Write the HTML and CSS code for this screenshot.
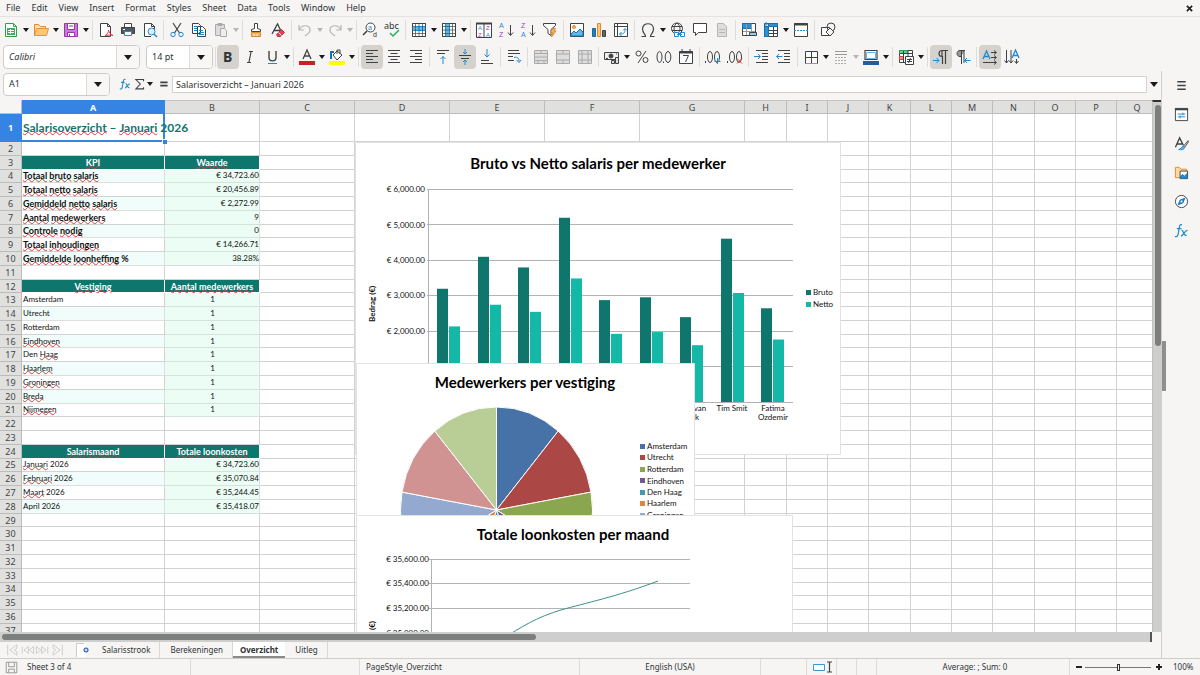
FILE: index.html
```html
<!DOCTYPE html>
<html lang="nl">
<head>
<meta charset="utf-8">
<title>Salarisoverzicht</title>
<link rel="stylesheet" href="styles.css">
</head>
<body>
<div class="app">
<header class="menubar">
  <nav class="menus" aria-label="Menu">
    <button>File</button><button>Edit</button><button>View</button><button>Insert</button><button>Format</button><button>Styles</button><button>Sheet</button><button>Data</button><button>Tools</button><button>Window</button><button>Help</button>
  </nav>
  <button class="close" aria-label="Close document"><svg viewBox="0 0 8 8"><path d="M1 1l6 6M7 1l-6 6"/></svg></button>
</header>

<div class="toolbar" role="toolbar" aria-label="Standard">
  <div class="group">
    <button class="tool" aria-label="New"><svg viewBox="0 0 16 16"><path stroke="#2f9e51" fill="#fff" d="M2.500 1.500h8l3 3v10h-11z"/><path stroke="#2f9e51" d="M10.500 1.500v3h3"/><path fill="#3aae5c" stroke="none" d="M4 6h8v7H4z"/><path stroke="#fff" d="M5 8.500h6M5 10.500h6M7.500 7v5"/></svg></button><button class="drop" aria-label="New options"></button>
    <button class="tool" aria-label="Open"><svg viewBox="0 0 16 16"><path fill="#fbe3b8" stroke="#dc8b33" d="M1.500 13.500v-11h4l2 2h5v3"/><path fill="#fcc877" stroke="#e3953d" d="M1.500 13.500l2-7h12l-2 7z"/></svg></button><button class="drop" aria-label="Recent files"></button>
    <button class="tool" aria-label="Save"><svg viewBox="0 0 16 16"><path fill="#c87bd0" stroke="#8f3da0" d="M1.500 1.500h13v13h-13z"/><path fill="#fff" stroke="#8f3da0" d="M4.500 1.500h7v6h-7zM4.500 10.500h7v4h-7z"/><path stroke="#8f3da0" d="M6 4h4M6.500 12v2"/></svg></button><button class="drop" aria-label="Save options"></button>
  </div>
  <div class="group">
    <button class="tool" aria-label="Export as PDF"><svg viewBox="0 0 16 16"><path fill="#fff" d="M2.500 1.500h7l3 3v10h-10z"/><path d="M9.500 1.500v3h3"/><path stroke="#dd3b4a" d="M7 14c3-3 3.500-4 3.500-6 .5 3 1.500 4 4.500 5.500-3-1-5-.5-8 .5z"/></svg></button>
    <button class="tool" aria-label="Print"><svg viewBox="0 0 16 16"><path fill="#fff" d="M4.500 1.500h7v4h-7z"/><path fill="#55585b" d="M1.500 5.500h13v6h-13z"/><path fill="#fff" stroke="#1e8bcd" d="M4.500 9.500h7v4h-7z"/><path stroke="#fff" d="M3 7.500h2"/></svg></button>
    <button class="tool" aria-label="Print preview"><svg viewBox="0 0 16 16"><path fill="#fff" d="M9 14.500H2.500v-13h7l3 3v3"/><path d="M9.500 1.500v3h3"/><circle cx="9.500" cy="9.500" r="3.500" fill="#d9eefb" stroke="#1e8bcd"/><path stroke="#1e8bcd" stroke-width="1.500" d="M12 12l3 3"/></svg></button>
  </div>
  <div class="group">
    <button class="tool" aria-label="Cut"><svg viewBox="0 0 16 16"><path stroke-width="1.200" d="M4 1l6.500 10M12 1L5.500 11"/><circle cx="4" cy="12.500" r="2.200" stroke="#1e8bcd"/><circle cx="12" cy="12.500" r="2.200" stroke="#1e8bcd"/></svg></button>
    <button class="tool" aria-label="Copy"><svg viewBox="0 0 16 16"><path fill="#fff" d="M1.500 1.500h6l2 2v8h-8zM6.500 4.500h5l3 3v7h-8z"/><path stroke="#1e8bcd" d="M3 4.500h3M3 6.500h3M3 8.500h3M8 8.500h4M8 10.500h5M8 12.500h5"/></svg></button>
    <button class="tool" aria-label="Paste" disabled><svg viewBox="0 0 16 16"><path stroke="#aaa" fill="#ddd" d="M2.500 2.500h9v11h-9z"/><path fill="#aaa" stroke="#aaa" d="M5 1.500h4v2H5z"/><path stroke="#aaa" fill="#eee" d="M7.500 6.500h4l2 2v6h-6z"/></svg></button><button class="drop off" aria-label="Paste options" disabled></button>
  </div>
  <div class="group">
    <button class="tool" aria-label="Clone formatting"><svg viewBox="0 0 16 16"><path fill="#fff" d="M6.500 6.500v-5h3v5l3 1v2h-9v-2z"/><path stroke="#dc8b33" fill="#f7b266" d="M3.500 10.500h9v4h-9z"/><path stroke="#fff" d="M6 12v2M9 12v2"/></svg></button>
    <button class="tool" aria-label="Clear formatting"><svg viewBox="0 0 16 16"><path stroke-width="1.300" d="M2 12L7.500 2 11 9M4 8.500h6"/><path fill="#e04457" stroke="#c92e42" d="M6.500 12.500l5-5 3 3-4 4h-3z"/><path stroke="#fff" d="M8.500 10.500l3 3"/></svg></button>
  </div>
  <div class="group">
    <button class="tool" aria-label="Undo" disabled><svg viewBox="0 0 16 16"><path stroke="#b5b5b3" stroke-width="1.200" d="M2 3v5h5M2 8c3-6 10-5 11-1 .5 3-1 4-5 7"/></svg></button><button class="drop off" aria-label="Undo list" disabled></button>
    <button class="tool" aria-label="Redo" disabled><svg viewBox="0 0 16 16"><path stroke="#b5b5b3" stroke-width="1.200" d="M14 3v5H9M14 8C11 2 4 3 3 7c-.5 3 1 4 5 7"/></svg></button><button class="drop off" aria-label="Redo list" disabled></button>
  </div>
  <div class="group">
    <button class="tool" aria-label="Find and replace"><svg viewBox="0 0 16 16"><circle cx="8.500" cy="5.500" r="4.500" fill="#fff"/><path stroke-width="1.600" d="M5 9l-4 4"/><text class="glyph blue" x="6" y="8">a</text><text class="glyph" x="11" y="15">d</text></svg></button>
    <button class="tool" aria-label="Spelling"><svg viewBox="0 0 16 16"><text class="glyph abc" x="0" y="7">abc</text><path stroke="#27ae60" stroke-width="1.500" d="M6 11l3 3 6-6"/></svg></button>
  </div>
  <div class="group">
    <button class="tool" aria-label="Row"><svg viewBox="0 0 16 16"><path fill="#fff" d="M1.500 1.500h13v13h-13z"/><path fill="#63b6ec" stroke="#1e8bcd" d="M1.500 4.500h13v4h-13z"/><path stroke-width=".7" d="M1.500 1.500h13v13h-13zM4.500 1.500v13M8 1.500v13M11.500 1.500v13M2 11.500h12"/></svg></button><button class="drop" aria-label="Row options"></button>
    <button class="tool" aria-label="Column"><svg viewBox="0 0 16 16"><path fill="#fff" d="M1.500 1.500h13v13h-13z"/><path fill="#63b6ec" stroke="#1e8bcd" d="M4.500 1.500h4v13h-4z"/><path stroke-width=".7" d="M1.500 1.500h13v13h-13zM11.500 1.500v13M2 4.500h12M2 8h12M2 11.500h12"/></svg></button><button class="drop" aria-label="Column options"></button>
  </div>
  <div class="group">
    <button class="tool" aria-label="Sort"><svg viewBox="0 0 16 16"><path fill="#fff" d="M.500 1.500h15v14H.500zM8 2v13"/><path stroke-width="2" d="M0 1.500h16"/><text class="glyph tiny blue" x="2" y="8">A</text><text class="glyph tiny purple" x="2" y="15">Z</text><text class="glyph tiny purple" x="10" y="8">Z</text><text class="glyph tiny blue" x="10" y="15">A</text></svg></button>
    <button class="tool" aria-label="Sort ascending"><svg viewBox="0 0 16 16"><text class="glyph blue" x="1" y="6">A</text><text class="glyph purple" x="1" y="15">Z</text><path d="M12.500 3v10M10 10.500l2.500 3 2.500-3"/></svg></button>
    <button class="tool" aria-label="Sort descending"><svg viewBox="0 0 16 16"><text class="glyph purple" x="1" y="6">Z</text><text class="glyph blue" x="1" y="15">A</text><path d="M12.500 3v10M10 10.500l2.500 3 2.500-3"/></svg></button>
    <button class="tool" aria-label="AutoFilter"><svg viewBox="0 0 16 16"><path fill="#fff" d="M1.500 1.500h12v2l-4.500 4v6l-3-2v-4l-4.500-4z"/><path fill="#fcb755" stroke="#dc8b33" d="M11 6.500l-2.500 4h2l-1 4.500 4.500-6h-2l1.500-2.500z"/></svg></button>
  </div>
  <div class="group">
    <button class="tool" aria-label="Insert image"><svg viewBox="0 0 16 16"><path fill="#fff" d="M1.500 1.500h13v13h-13z"/><circle cx="5" cy="5" r="1.500" fill="#fcb755" stroke="#dc8b33"/><path fill="#63b6ec" stroke="#1472b0" d="M2 14v-2l3-3 2 2 4-4 3 3v4z"/></svg></button>
    <button class="tool" aria-label="Insert chart"><svg viewBox="0 0 16 16"><path fill="#2581be" stroke="#1a6799" d="M1.500 6.500h3v8h-3z"/><path fill="#fcc877" stroke="#dc8b33" d="M6.500 1.500h3v13h-3z"/><path fill="#666" d="M11.500 8.500h3v6h-3z"/></svg></button>
    <button class="tool" aria-label="Pivot table"><svg viewBox="0 0 16 16"><path fill="#fff" d="M1.500 1.500h13v13h-13zM2 4.500h12M4.500 2v12"/><path stroke="#1e8bcd" d="M7 12c4 0 5-1 5-5M10 8.500l2-2 2 2M8.500 10l-2 2 2 2"/></svg></button>
  </div>
  <div class="group">
    <button class="tool" aria-label="Special character"><svg viewBox="0 0 16 16"><path stroke-width="1.200" d="M1.500 14.500h4c.5-2-3-3-3-7.500 0-7 11-7 11 0 0 4.500-3.500 5.500-3 7.500h4"/></svg></button><button class="drop" aria-label="More characters"></button>
    <button class="tool" aria-label="Hyperlink"><svg viewBox="0 0 16 16"><circle cx="7" cy="6.500" r="5.500"/><path d="M7 1c-4 3-4 8 0 11 4-3 4-8 0-11zM2 4.500h10M2 8.500h10"/><path fill="#fff" stroke="#1e8bcd" d="M4.500 10.500h4v4h-4zM10.500 10.500h4v4h-4zM7 12.500h5"/></svg></button>
    <button class="tool" aria-label="Comment"><svg viewBox="0 0 16 16"><path fill="#fff" d="M1.500 1.500h13v9h-8l-3 3v-3h-2z"/></svg></button>
    <button class="tool" aria-label="Headers and footers" disabled><svg viewBox="0 0 16 16"><path stroke="#b5b5b3" fill="#ddd" d="M3.500 1.500h6l3 3v10h-9z"/><path stroke="#b5b5b3" d="M5 7.500h6M5 10.500h6"/></svg></button>
  </div>
  <div class="group">
    <button class="tool" aria-label="Define print area"><svg viewBox="0 0 16 16"><path fill="#fff" d="M1.500 1.500h13v12h-13z"/><path fill="#2f8fd0" stroke="#1472b0" d="M1.500 1.500h9v5h-9z"/><path stroke="#999" d="M2 9.500h12M5.500 2v11M10.500 2v11"/><path fill="#9ccbea" d="M8.500 10.500h7v3h-7z"/></svg></button>
    <button class="tool" aria-label="Freeze rows and columns"><svg viewBox="0 0 16 16"><path fill="#fff" d="M1.500 1.500h13v13h-13z"/><path d="M10.500 2v12M2 8.500h12M2 11.500h12"/><path fill="#2f8fd0" stroke="#1472b0" d="M1.500 4.500h4v10h-4zM5.500 1.500h9v3h-9z"/><path stroke="#1e8bcd" d="M1 2h4M3 0v4"/></svg></button><button class="drop" aria-label="Freeze options"></button>
    <button class="tool" aria-label="Split window"><svg viewBox="0 0 16 16"><path fill="#fff" d="M1.500 1.500h13v13h-13z"/><path stroke-width="2" d="M1 2.500h14"/><path stroke="#1e8bcd" stroke-dasharray="2 1" d="M1 8.500h14"/></svg></button>
  </div>
  <div class="group last">
    <button class="tool" aria-label="Show draw functions"><svg viewBox="0 0 16 16"><path fill="#fff" d="M1.500 5.500h8v8h-8z"/><circle cx="11" cy="5" r="4"/><path fill="#f6f5f4" d="M10 6l4 4-4 4-4-4z"/></svg></button>
  </div>
</div>

<div class="toolbar format" role="toolbar" aria-label="Formatting">
  <div class="combo font"><input aria-label="Font name" value="Calibri"><button aria-label="Font list"></button></div>
  <div class="combo size"><input aria-label="Font size" value="14 pt"><button aria-label="Size list"></button></div>
  <div class="group first">
    <button class="tool on" aria-label="Bold"><svg viewBox="0 0 16 16"><text class="letter heavy" x="3" y="13">B</text></svg></button>
    <button class="tool" aria-label="Italic"><svg viewBox="0 0 16 16"><path stroke-width="1.200" d="M7 2.500h4M9 3L7 13M5 13.500h4"/></svg></button>
    <button class="tool" aria-label="Underline"><svg viewBox="0 0 16 16"><path stroke-width="1.400" d="M5 2v6.500c0 4.500 7 4.500 7 0V2"/><path stroke="#1e8bcd" d="M4 14.500h9"/></svg></button><button class="drop" aria-label="Underline style"></button>
  </div>
  <div class="group">
    <button class="tool" aria-label="Font color"><svg viewBox="0 0 16 16"><path stroke-width="1.300" d="M4 10l4-9 4 9M5.500 7h5"/><path fill="#c9211e" stroke="none" d="M0 12h16v4H0z"/></svg></button><button class="drop" aria-label="Font color list"></button>
    <button class="tool" aria-label="Highlighting"><svg viewBox="0 0 16 16"><path fill="#fff" d="M4 6l4-4 5 4-5 5z"/><path d="M8 5V1h3v4"/><path stroke="#1472b0" stroke-width="2" d="M2 10V3h3"/><path fill="#ff0" stroke="none" d="M0 12h16v4H0z"/></svg></button><button class="drop" aria-label="Highlighting list"></button>
  </div>
  <div class="group">
    <button class="tool on" aria-label="Align left"><svg viewBox="0 0 16 16"><path d="M2 1.500h12M2 4.500h7M2 7.500h12M2 10.500h7M2 13.500h12"/></svg></button>
    <button class="tool" aria-label="Align center"><svg viewBox="0 0 16 16"><path d="M2 1.500h12M4.500 4.500h7M2 7.500h12M4.500 10.500h7M2 13.500h12"/></svg></button>
    <button class="tool" aria-label="Align right"><svg viewBox="0 0 16 16"><path d="M2 1.500h12M7 4.500h7M2 7.500h12M7 10.500h7M2 13.500h12"/></svg></button>
  </div>
  <div class="group">
    <button class="tool" aria-label="Align top"><svg viewBox="0 0 16 16"><path d="M2 1.500h12M2 4.500h8"/><path stroke="#1e8bcd" d="M8 15V7.500M5.500 10L8 7.500l2.500 2.500"/></svg></button>
    <button class="tool on" aria-label="Center vertically"><svg viewBox="0 0 16 16"><path d="M2 6.500h12M4 9.500h8"/><path stroke="#1e8bcd" d="M8 0v5M6 3l2 2 2-2M8 16v-5M6 13l2-2 2 2"/></svg></button>
    <button class="tool" aria-label="Align bottom"><svg viewBox="0 0 16 16"><path d="M2 11.500h8M2 14.500h12"/><path stroke="#1e8bcd" d="M8 0v8M5.500 5.500L8 8l2.500-2.500"/></svg></button>
  </div>
  <div class="group">
    <button class="tool" aria-label="Wrap text"><svg viewBox="0 0 16 16"><path d="M2 1.500h11M2 4.500h12M2 7.500h5M2 11.500h6"/><path stroke="#1e8bcd" d="M8 8.500c4-1 5 1 5 4M10.500 11l2.500 2.500 2-2.500"/></svg></button>
  </div>
  <div class="group">
    <button class="tool" aria-label="Merge and center cells" disabled><svg viewBox="0 0 16 16"><path stroke="#aaa" fill="#ddd" d="M1.500 1.500h13v13h-13zM2 4.500h12M2 8h12M2 11.500h12M8 2v3M5 12v3M11 12v3"/></svg></button>
    <button class="tool" aria-label="Merge cells" disabled><svg viewBox="0 0 16 16"><path stroke="#aaa" fill="#ddd" d="M1.500 1.500h13v13h-13zM2 5h12M2 11h12M8 2v3M8 11v3"/></svg></button>
    <button class="tool" aria-label="Unmerge cells" disabled><svg viewBox="0 0 16 16"><path stroke="#aaa" fill="#ddd" d="M1.500 1.500h13v13h-13zM2 5h12M2 11h12M5 2v12M11 2v12"/></svg></button>
  </div>
  <div class="group">
    <button class="tool" aria-label="Format as currency"><svg viewBox="0 0 16 16"><path fill="#eee" d="M.500 3.500h14v7H.500z"/><circle cx="7" cy="7" r="2" fill="#444"/><path fill="#ddd" d="M7.500 11.500h3v3h-3zM11.500 8.500h3v6h-3z"/><path d="M2 9.500h2M12 5h1"/></svg></button><button class="drop" aria-label="Currency list"></button>
    <button class="tool" aria-label="Format as percent"><svg viewBox="0 0 16 16"><circle cx="4.500" cy="4.500" r="2.500"/><circle cx="11.500" cy="11" r="2.500"/><path d="M12 2L4 14"/></svg></button>
    <button class="tool" aria-label="Format as number"><svg viewBox="0 0 16 16"><ellipse cx="3.500" cy="8" rx="2.500" ry="5.500"/><ellipse cx="12" cy="8" rx="2.800" ry="5.500"/><path d="M7.500 12.500v1.500"/></svg></button>
    <button class="tool" aria-label="Format as date"><svg viewBox="0 0 16 16"><path fill="#fff" d="M1.500 2.500h13v12h-13z"/><path stroke-width="2" d="M1 3.500h14"/><path d="M4 0v3M12 0v3M5 6.500h5.500l-3 6.500"/></svg></button>
  </div>
  <div class="group">
    <button class="tool" aria-label="Add decimal place"><svg viewBox="0 0 16 16"><path d="M.500 12v2"/><ellipse cx="5" cy="8" rx="2.500" ry="5.500"/><ellipse cx="12" cy="8" rx="2.500" ry="5.500"/><path stroke="#1e8bcd" d="M12.500 9v6M9.500 12.500h6"/></svg></button>
    <button class="tool" aria-label="Delete decimal place"><svg viewBox="0 0 16 16"><path d="M.500 12v2"/><ellipse cx="5" cy="8" rx="2.500" ry="5.500"/><ellipse cx="12" cy="8" rx="2.500" ry="5.500"/><path stroke="#e03c31" d="M10 9.500l5 5M15 9.500l-5 5"/></svg></button>
  </div>
  <div class="group">
    <button class="tool" aria-label="Increase indent"><svg viewBox="0 0 16 16"><path d="M2 1.500h12M8 4.500h6M8 7.500h6M8 10.500h6M2 13.500h12"/><path stroke="#1e8bcd" d="M0 7.500h6M4 5l2.500 2.500L4 10"/></svg></button>
    <button class="tool" aria-label="Decrease indent"><svg viewBox="0 0 16 16"><path d="M2 1.500h12M8 4.500h6M8 7.500h6M8 10.500h6M2 13.500h12"/><path stroke="#1e8bcd" d="M.500 7.500h6M3 5L.500 7.500 3 10"/></svg></button>
  </div>
  <div class="group">
    <button class="tool" aria-label="Borders"><svg viewBox="0 0 16 16"><path fill="#fff" stroke-width="1" d="M2.500 2.500h12v12h-12zM8.500 2v12M2 8.500h12"/><path stroke="#dc8b33" d="M2.500 14.500h12"/></svg></button><button class="drop" aria-label="Border list"></button>
    <button class="tool" aria-label="Border style" disabled><svg viewBox="0 0 16 16"><path stroke="#999" d="M2 2.500h12M2 5.500h12"/><path stroke="#aaa" stroke-dasharray="2 1" d="M2 8.500h12M2 11.500h12M2 14.500h12"/></svg></button><button class="drop off" aria-label="Border style list" disabled></button>
    <button class="tool" aria-label="Border color"><svg viewBox="0 0 16 16"><path fill="#fff" stroke-width="1.200" d="M2 1.500h12v9H2z"/><path stroke="#63b6ec" d="M3.500 3.500h9v6h-9z"/><path fill="#1f5fa0" stroke="none" d="M0 12h16v4H0z"/></svg></button><button class="drop" aria-label="Border color list"></button>
  </div>
  <div class="group">
    <button class="tool" aria-label="Conditional formatting"><svg viewBox="0 0 16 16"><path fill="#fff" d="M1.500 1.500h13v12h-13z"/><path fill="#6ecb8b" stroke="#2f9e51" d="M1.500 1.500h8v3h-8z"/><path fill="#f08a80" stroke="#d04a40" d="M1.500 7.500h4v3h-4z"/><path d="M5.500 2v11M10 2v5M2 4.500h12"/><path fill="#fff" d="M7.500 7.500h8v8h-8zM9 10.500h5M9 12.500h5M12.500 9l-2 5"/></svg></button><button class="drop" aria-label="Conditional list"></button>
  </div>
  <div class="group">
    <button class="tool on" aria-label="Left to right"><svg viewBox="0 0 16 16"><path stroke-width="1.200" d="M15 1.500H9c-4 0-4 6 0 6V2M9.500 7v8M12.500 2v13"/><path stroke="#1e8bcd" d="M0 11.500h6M3.500 9L6 11.500 3.500 14"/></svg></button>
    <button class="tool" aria-label="Right to left"><svg viewBox="0 0 16 16"><path fill="#999" d="M10 1.500H5c-4 0-4 6 0 6h1"/><path d="M6.500 2v13M9 2v12"/><path stroke="#1e8bcd" d="M15.500 11.500h-6M12 9l-2.500 2.500L12 14"/></svg></button>
  </div>
  <div class="group last">
    <button class="tool on" aria-label="Text direction horizontal"><svg viewBox="0 0 16 16"><path stroke="#1e8bcd" stroke-width="1.300" d="M1 10l3.500-8L8 10M2 7.500h5"/><path d="M9 3.500h5M12 1.500l2.500 2-2.500 2M9 8.500h5M12 6.500l2.500 2-2.500 2M1 13.500h13M12 11.500l2.500 2-2.500 2"/></svg></button>
    <button class="tool" aria-label="Text direction vertical"><svg viewBox="0 0 16 16"><path stroke="#1e8bcd" stroke-width="1.300" d="M8 9l3.500-8L15 9M9 6.500h5"/><path d="M2.500 1v13M.500 11.500l2 2.500 2-2.500M7 1v13M5 11.500L7 14l2-2.500M12.500 10v4M10.500 12l2 2.500 2-2.500"/></svg></button>
  </div>
</div>

<div class="workspace">
  <main class="document">
    <div class="formulabar">
      <div class="combo name"><input aria-label="Name box" value="A1"><button aria-label="Name list"></button></div>
      <button class="mini" aria-label="Function wizard"><svg class="fx" viewBox="0 0 16 16"><path d="M8 2.500C6 1.500 5.500 3 5 6l-1 6c-.5 2-1.500 2.500-3 2M2.500 6H7M8 8c2-1.500 2 5.500 5 4.500M13.500 8C11 7.500 10 12 7.500 13"/></svg></button>
      <button class="mini" aria-label="Select function"><svg viewBox="0 0 16 16"><path stroke-width="1.300" d="M13 4.500v-2H3.500L9 8l-5.500 6H13v-2"/></svg></button><button class="drop" aria-label="Function list"></button>
      <button class="mini wide" aria-label="Formula"><svg viewBox="0 0 16 16"><path stroke-width="2" d="M4 6h9M4 10h9"/></svg></button>
      <input class="formula" aria-label="Input line" value="Salarisoverzicht – Januari 2026">
      <button class="expand" aria-label="Expand formula bar"></button>
    </div>
    <div class="sheetarea">
      <div class="gridwindow">
        <table class="sheet" id="sheet"></table>

        <svg class="chart salaries" viewBox="0 0 486 313" role="img" aria-label="Bruto vs Netto salaris per medewerker">
          <path class="frame" d="M.500.500h485v312H.500z"/>
          <text class="title" x="243" y="27">Bruto vs Netto salaris per medewerker</text>
          <path class="rule" d="M72 47.500h366M72 82.500h366M72 118.500h366M72 153.500h366M72 189.500h366M72 224.500h366M72 260.500h366M73.500 47v213"/>
          <g class="axis"><text x="70" y="50">€ 6,000.00</text><text x="70" y="86">€ 5,000.00</text><text x="70" y="121">€ 4,000.00</text><text x="70" y="156">€ 3,000.00</text><text x="70" y="192">€ 2,000.00</text><text x="70" y="227">€ 1,000.00</text></g>
          <text class="axistitle" transform="translate(20 180) rotate(-90)">Bedrag (€)</text>
          <g id="bars"></g>
          <g class="category"><text x="345" y="269">van</text><text x="342" y="278">k</text><text x="377" y="269">Tim Smit</text><text x="418" y="269">Fatima</text><text x="418" y="278">Ozdemir</text></g>
          <g class="keys"><path fill="#0f766e" d="M451 148h5v5h-5z"/><path fill="#14b8a6" d="M451 160h5v5h-5z"/></g>
          <g class="legend"><text x="458" y="153">Bruto</text><text x="458" y="165">Netto</text></g>
        </svg>

        <svg class="chart locations" viewBox="0 0 339 221" role="img" aria-label="Medewerkers per vestiging">
          <path class="frame" d="M.500.500h338v220H.500z"/>
          <text class="title" x="169" y="25">Medewerkers per vestiging</text>
          <g class="pie">
            <path fill="#4672a8" d="M140.500 147V44A96 103 0 0 1 202.200 68.100z"/>
            <path fill="#ab4744" d="M140.500 147L202.200 68.100A96 103 0 0 1 235 129.100z"/>
            <path fill="#8aa64f" d="M140.500 147L235 129.100A96 103 0 0 1 223.600 198.500z"/>
            <path fill="#725990" d="M140.500 147L223.600 198.500A96 103 0 0 1 173.300 243.800z"/>
            <path fill="#4299b0" d="M140.500 147L173.300 243.800A96 103 0 0 1 107.700 243.800z"/>
            <path fill="#dc853e" d="M140.500 147L107.700 243.800A96 103 0 0 1 57.400 198.500z"/>
            <path fill="#93a9d0" d="M140.500 147L57.400 198.500A96 103 0 0 1 46 129.100z"/>
            <path fill="#d09392" d="M140.500 147L46 129.100A96 103 0 0 1 78.800 68.100z"/>
            <path fill="#b9cd96" d="M140.500 147L78.800 68.100A96 103 0 0 1 140.500 44z"/>
          </g>
          <g class="keys"><path fill="#4672a8" d="M284 81h5v5h-5z"/><path fill="#ab4744" d="M284 92h5v5h-5z"/><path fill="#8aa64f" d="M284 104h5v5h-5z"/><path fill="#725990" d="M284 115h5v5h-5z"/><path fill="#4299b0" d="M284 127h5v5h-5z"/><path fill="#dc853e" d="M284 138h5v5h-5z"/><path fill="#93a9d0" d="M284 150h5v5h-5z"/></g>
          <g class="legend"><text x="291" y="86">Amsterdam</text><text x="291" y="97">Utrecht</text><text x="291" y="109">Rotterdam</text><text x="291" y="121">Eindhoven</text><text x="291" y="132">Den Haag</text><text x="291" y="143">Haarlem</text><text x="291" y="155">Groningen</text></g>
        </svg>

        <svg class="chart months" viewBox="0 0 437 251" role="img" aria-label="Totale loonkosten per maand">
          <path class="frame" d="M.500.500h436v250H.500z"/>
          <text class="title" x="217" y="25">Totale loonkosten per maand</text>
          <path class="rule" d="M73 44.500h261M73 68.500h261M73 93.500h261M73 118.500h261M75.500 44v200"/>
          <g class="axis"><text x="73" y="47">€ 35,600.00</text><text x="73" y="71">€ 35,400.00</text><text x="73" y="96">€ 35,200.00</text><text x="73" y="121">€ 35,000.00</text></g>
          <text class="axistitle end" transform="translate(19 106) rotate(-90)">Bedrag (€)</text>
          <path class="line" d="M145 125C165 112 181 102 205 95S260 82 302 66"/>
        </svg>
      </div>
      <div class="vscroll"><div class="thumb"></div></div>
      <div class="hscroll"><div class="thumb"></div></div>
    </div>
    <div class="tabbar">
      <div class="tabnav">
        <button aria-label="First sheet"><svg viewBox="0 0 16 16"><path d="M2.500 2v12M13 2L5 8l8 6v-4l-3-2 3-2z"/></svg></button>
        <button aria-label="Previous sheet"><svg viewBox="0 0 16 16"><path d="M2 4v8M9 4L4 8l5 4zM15 4l-5 4 5 4z"/></svg></button>
        <button aria-label="Next sheet"><svg viewBox="0 0 16 16"><path d="M14 4v8M7 4l5 4-5 4zM1 4l5 4-5 4z"/></svg></button>
        <button aria-label="Last sheet"><svg viewBox="0 0 16 16"><path d="M13.500 2v12M3 2l8 6-8 6v-4l3-2-3-2z"/></svg></button>
      </div>
      <button class="addsheet" aria-label="Add sheet"><svg viewBox="0 0 16 16"><path fill="#fff" stroke="none" d="M1 1h10v14H1z"/><path stroke="#ccc" d="M1.500 15V1.500h8"/><circle cx="11" cy="8" r="2.500" fill="#2a62a8" stroke="none"/><path stroke="#fff" d="M9.500 8h3M11 6.500v3"/></svg></button>
      <nav class="tabs" aria-label="Sheets"><button>Salarisstrook</button><button>Berekeningen</button><button class="current">Overzicht</button><button>Uitleg</button></nav>
    </div>
  </main>
  <aside class="sidebar">
    <button aria-label="Sidebar settings"><svg viewBox="0 0 16 16"><path stroke-width="1.600" d="M3.500 4h9M3.500 8h9M3.500 12h9"/></svg></button>
    <button aria-label="Properties"><svg viewBox="0 0 16 16"><path fill="#fff" d="M1.500 1.500h13v13h-13z"/><path stroke-width="2" d="M1 2.500h14"/><path stroke="#1e8bcd" d="M4 7.500h8M4 10.500h8M9.500 6v3M6.500 9v3"/></svg></button>
    <button aria-label="Styles"><svg viewBox="0 0 16 16"><path stroke-width="1.400" d="M1.500 12L6 2l4 8M3 8.500h5.500"/><path fill="#fff" d="M15 5l-5 6 1.500 1L15.500 6z"/><path fill="#63b6ec" stroke="#1e8bcd" d="M5 14.500c3 .5 6 0 6.500-2.500l-1.500-1c-2 0-2 3-5 3.500z"/></svg></button>
    <button aria-label="Gallery"><svg viewBox="0 0 16 16"><path fill="#fbd9a3" stroke="#dc8b33" d="M1.500 13.500v-11h4l2 2h6v9z"/><path fill="#fff" d="M6.500 6.500h8v8h-8z"/><path fill="#2f8fd0" stroke="#1472b0" d="M7 14v-2l2-2 2 2 3-3v5z"/></svg></button>
    <button aria-label="Navigator"><svg viewBox="0 0 16 16"><circle cx="8" cy="8" r="6.500" fill="#fff"/><path fill="#2f8fd0" stroke="#1472b0" d="M11.500 4.500l-2 5-5 2 2-5z"/><circle cx="8" cy="8" r="1" fill="#fff" stroke="none"/></svg></button>
    <button aria-label="Functions"><svg class="fx" viewBox="0 0 16 16"><path d="M8.500 2C6.500 1 6 2.500 5.500 5.500l-1 6c-.5 2.500-1.500 3.500-3.500 3M3 6h5M8 8c2-1.500 2 6.500 5.500 5M14.500 8C11.500 7.500 10.500 13 7.500 14"/></svg></button>
    <div class="handle"></div>
  </aside>
</div>

<footer class="statusbar">
  <span class="savestate"><svg viewBox="0 0 16 16"><path d="M1.500 1.500h13v13h-13zM4.500 2v5h7V2M4.500 14v-4h7v4"/></svg></span>
  <span class="cell sheets">Sheet 3 of 4</span>
  <span class="cell blank"></span>
  <span class="cell page">PageStyle_Overzicht</span>
  <span class="cell language">English (USA)</span>
  <span class="cell insert"></span>
  <span class="cell mode"><svg viewBox="0 0 22 14"><path stroke="#3c97d6" fill="#fff" d="M2.500 4.500h11v6h-11z"/><path stroke-width="1.200" d="M16 2h5M18.500 2v10M16 12h5"/></svg></span>
  <span class="cell slim"></span>
  <span class="cell slim"></span>
  <span class="cell summary">Average: ; Sum: 0</span>
  <div class="zoom"><button aria-label="Zoom out"><svg viewBox="0 0 8 8"><path d="M1 4h6"/></svg></button><input type="range" aria-label="Zoom" min="0" max="100" value="50"><button aria-label="Zoom in"><svg viewBox="0 0 8 8"><path d="M1 4h6M4 1v6"/></svg></button></div>
  <span class="percent">100%</span>
</footer>
</div>
<script src="sheet.js"></script>
</body>
</html>
```
FILE: styles.css
```css
* { box-sizing: border-box; }
body { margin: 0; background: #f6f5f4; color: #2e3436; font: 9px/12px "Noto Sans", sans-serif; }
button, input { font: inherit; color: inherit; margin: 0; padding: 0; border: 0; background: none; min-width: 0; }
button { display: flex; align-items: center; justify-content: center; flex: none; }
svg { display: block; fill: none; stroke: #3f4244; stroke-width: 1; }
svg text { stroke: none; }
.app { display: flex; flex-direction: column; height: 100vh; overflow: hidden; }

.menubar { display: flex; justify-content: space-between; height: 17px; flex: none; border-bottom: 1px solid #e4e3e1; }
.menus { display: flex; gap: 11px; padding-left: 6px; }
.close { width: 22px; }
.close svg { width: 7px; height: 7px; stroke: #222; stroke-width: 2; }

.toolbar { display: flex; align-items: center; flex: none; height: 26px; }
.toolbar.format { height: 28px; padding-left: 3px; }
.group { display: flex; align-items: center; border-right: 1px solid #dddcda; padding-right: 2px; margin-right: 2px; height: 20px; }
.group.last { border-right: 0; }
.group.first { border-left: 1px solid #dddcda; padding-left: 1px; margin-left: 2px; }
.tool { width: 22px; height: 24px; border-radius: 4px; }
.tool.on { background: #d5d1cd; }
.tool svg { width: 16px; height: 16px; overflow: visible; }
.drop { width: 8px; height: 20px; }
.drop::before, .combo button::before, .expand::before { content: ""; border: 3px solid transparent; border-top: 4px solid #1a1a1a; border-bottom: 0; }
.drop.off::before { border-top-color: #b5b5b3; }
.combo button::before, .expand::before { border-width: 5px 4px 0; }
.glyph { font: 7px/8px "Liberation Sans", sans-serif; fill: #2e3436; }
.glyph.abc { font: 9px/9px "Noto Sans", sans-serif; }
.glyph.tiny { font-size: 6px; }
.glyph.blue { fill: #1e8bcd; }
.glyph.purple { fill: #a43dc0; }
.letter { font: 14px/14px "Noto Sans", sans-serif; fill: #2e3436; }
.heavy { font-weight: 700; }

.combo { display: flex; flex: none; height: 24px; border: 1px solid #cfcbc7; border-radius: 4px; background: #fff; overflow: hidden; }
.combo input { flex: 1; padding-left: 5px; }
.combo button { width: 23px; border-left: 1px solid #dddad7; background: #f8f7f6; }
.combo.font { width: 137px; font-style: italic; margin-right: 6px; }
.combo.size { width: 67px; }
.combo.name { width: 107px; height: 23px; margin-right: 8px; }

.workspace { display: flex; flex: 1; min-height: 0; }
.document { display: flex; flex-direction: column; flex: 1; min-width: 0; }
.formulabar { display: flex; align-items: center; flex: none; height: 29px; padding: 0 0 3px 3px; }
.mini { width: 14px; height: 20px; }
.mini.wide { width: 18px; }
.mini svg { width: 13px; height: 14px; }
.fx { stroke: #1e8bcd; stroke-width: 1.300; }
.formula { flex: 1; height: 17px; border: 1px solid #d4d1ce; background: #fff; padding-left: 3px; }
.expand { width: 14px; height: 20px; }

.sheetarea { display: grid; grid-template: minmax(0, 1fr) 10px / minmax(0, 1fr) 9px; flex: 1; min-height: 0; }
.gridwindow { position: relative; overflow: hidden; background: #fff; }
.sheet { table-layout: fixed; width: 1158px; height: 538px; border-spacing: 0; font: 8px/11px Lato, sans-serif; color: #111; }
.sheet th, .sheet td { padding: 0 1px; border: solid #d2d2d2; border-width: 0 1px 1px 0; white-space: nowrap; }
.sheet tr.columns { height: 14px; }
.sheet tr.tall { height: 28px; }
.sheet thead th, .sheet th.rownum { background: #e0e0df; border-color: #bcbcbb; font: 9px/11px "Noto Sans", sans-serif; color: #444; text-align: center; }
.sheet thead th { border-top: 1px solid #c4c4c3; }
.sheet thead th.corner { background: #f6f5f4; border-color: #f6f5f4 #bcbcbb #bcbcbb #f6f5f4; }
.sheet thead th.active, .sheet th.rownum.active { background: #3584e4; border-color: #3584e4; color: #fff; font-weight: 700; }
.sheet .head { background: #0f766e; border-color: #fff; color: #fff; font-size: 9px; font-weight: 700; text-align: center; }
.sheet .label { font-size: 9px; font-weight: 700; }
.sheet .band { background: #f0fdfa; border-color: #dcdfde; }
.sheet .value { background: #ecfdf5; border-color: #d6e2dc; text-align: right; padding-right: 0; }
.sheet .count { text-align: center; }
.sheet .selected { position: relative; z-index: 1; font-size: 12px; line-height: 14px; font-weight: 700; color: #0f766e; box-shadow: inset -1px -1px #3584e4; border-color: #3584e4; }
.selected::after { content: ""; position: absolute; right: -3px; bottom: -3px; width: 4px; height: 4px; background: #3584e4; border: solid #fff; border-width: 1px 0 0 1px; }
.typo { text-decoration: underline wavy #dd3c3c 1px; text-underline-offset: -1px; text-decoration-skip-ink: none; }
.c0 { width: 22px; } .cA { width: 143px; } .cB { width: 95px; } .cG { width: 105px; } .cH { width: 41px; } .cK { width: 42px; }

.chart { position: absolute; font-family: Lato, sans-serif; font-size: 8px; }
.salaries { left: 355px; top: 42px; width: 486px; height: 313px; }
.locations { left: 356px; top: 263px; width: 339px; height: 221px; }
.months { left: 356px; top: 415px; width: 437px; height: 251px; }
.chart text { fill: #111; }
.frame { fill: #fff; stroke: #e2e2e2; }
.rule { stroke: #b3b3b3; }
.chart .title { font-size: 15px; font-weight: 700; text-anchor: middle; fill: #000; }
.axis { text-anchor: end; }
.axistitle { font-weight: 700; }
.axistitle.end { text-anchor: end; }
.category { text-anchor: middle; }
.keys { stroke: none; }
.pie { stroke: #fff; }
.line { stroke: #3b9184; stroke-width: 1; }
.gross { fill: #0f766e; stroke: none; }
.net { fill: #14b8a6; stroke: none; }

.vscroll { background: #cecece; border-top: 2px solid #333; padding: 3px 2px; border-left: 1px solid #c0c0c0; }
.vscroll .thumb { width: 6px; height: 46%; border-radius: 3px; background: #7d7f7f; }
.hscroll { background: #cecece; padding: 2px; border-right: 2px solid #555; }
.hscroll .thumb { width: 46.6%; height: 6px; border-radius: 3px; background: #7d7f7f; }

.tabbar { display: flex; flex: none; height: 16px; }
.tabnav { display: flex; padding-left: 5px; width: 74px; }
.tabnav button { width: 15px; }
.tabnav svg { width: 15px; height: 14px; stroke: #c9c8c6; }
.addsheet { width: 18px; }
.addsheet svg { width: 16px; height: 16px; }
.tabs { display: flex; }
.tabs button { padding: 0 9px 1px 10px; border-right: 1px solid #dad8d6; font-size: 8px; }
.tabs .current { background: #fff; font-weight: 700; padding: 0 7px 1px; border-right: 0; box-shadow: inset 0 -2px #8b8b8a; }

.sidebar { position: relative; display: flex; flex-direction: column; flex: none; width: 39px; border-left: 1px solid #d0ceca; }
.sidebar button { height: 29px; width: 39px; }
.sidebar svg { width: 15px; height: 15px; }
.handle { position: absolute; left: 0; top: 46%; width: 4px; height: 50px; background: #8f8f8e; }

.statusbar { display: flex; align-items: stretch; flex: none; height: 17px; border-top: 1px solid #cfcdca; font-size: 8px; line-height: 16px; }
.savestate { display: flex; align-items: center; width: 27px; padding-left: 5px; }
.savestate svg { width: 13px; height: 13px; stroke: #888; }
.cell { border-right: 1px solid #dddbd8; }
.sheets { width: 164px; }
.blank { width: 169px; }
.page { width: 220px; padding-left: 6px; }
.language { width: 181px; text-align: center; }
.insert { width: 46px; }
.mode { width: 30px; padding: 1px 0 0 4px; }
.mode svg { width: 22px; height: 14px; }
.slim { width: 20px; }
.summary { flex: 1; text-align: center; padding-left: 4px; }
.zoom { display: flex; align-items: center; padding-left: 5px; }
.zoom svg { width: 8px; height: 8px; stroke: #222; stroke-width: 2; }
.zoom input { width: 66px; height: 12px; margin: 0 4px 0 2px; appearance: none; }
.zoom input::-webkit-slider-runnable-track { height: 1px; background: #777; }
.zoom input::-webkit-slider-thumb { appearance: none; width: 3px; height: 7px; margin-top: -3px; background: #f6f5f4; border: 1px solid #333; }
.percent { width: 37px; padding-left: 10px; }
```
FILE: sheet.js
```js
const columns = "ABCDEFGHIJKLMNOPQ".split("");
const widths = ["cA", "cB", "cB", "cB", "cB", "cB", "cG", "cK", "cH", "cH", "cK", "cH", "cH", "cK", "cH", "cH", "cH"];

// Cell contents by row: [column A, column B, kind]
const rows = {
  1: ["Salarisoverzicht – Januari 2026", "", "title"],
  3: ["KPI", "Waarde", "head"],
  4: ["Totaal bruto salaris", "€ 34,723.60", "kpi"],
  5: ["Totaal netto salaris", "€ 20,456.89", "kpi"],
  6: ["Gemiddeld netto salaris", "€ 2,272.99", "kpi"],
  7: ["Aantal medewerkers", "9", "kpi"],
  8: ["Controle nodig", "0", "kpi"],
  9: ["Totaal inhoudingen", "€ 14,266.71", "kpi"],
  10: ["Gemiddelde loonheffing %", "38.28%", "kpi"],
  12: ["Vestiging", "Aantal medewerkers", "head"],
  13: ["Amsterdam", "1", "count"],
  14: ["Utrecht", "1", "count"],
  15: ["Rotterdam", "1", "count"],
  16: ["Eindhoven", "1", "count"],
  17: ["Den Haag", "1", "count"],
  18: ["Haarlem", "1", "count"],
  19: ["Groningen", "1", "count"],
  20: ["Breda", "1", "count"],
  21: ["Nijmegen", "1", "count"],
  24: ["Salarismaand", "Totale loonkosten", "head"],
  25: ["Januari 2026", "€ 34,723.60", "month"],
  26: ["Februari 2026", "€ 35,070.84", "month"],
  27: ["Maart 2026", "€ 35,244.45", "month"],
  28: ["April 2026", "€ 35,418.07", "month"]
};

const known = new Set(["Amsterdam", "Utrecht", "Rotterdam", "Den", "April"]);

function spellcheck(text) {
  return text.split(" ").map(word =>
    /^[A-Za-z]+$/.test(word) && !known.has(word) ? `<span class="typo">${word}</span>` : word
  ).join(" ");
}

function classesFor(kind, row) {
  if (kind === "title") return ["selected", ""];
  if (kind === "head") return ["head", "head"];
  const band = row % 2 === 0 ? " band" : "";
  return [(kind === "kpi" ? "label" : "") + band, "value" + (kind === "count" ? " count" : "")];
}

let html = `<colgroup><col class="c0">${widths.map(w => `<col class="${w}">`).join("")}</colgroup>`;
html += `<thead><tr class="columns"><th class="corner"></th>${columns.map(c => `<th scope="col"${c === "A" ? ' class="active"' : ""}>${c}</th>`).join("")}</tr></thead><tbody>`;
for (let row = 1; row <= 37; row++) {
  const [a, b, kind] = rows[row] || ["", "", ""];
  const [classA, classB] = kind ? classesFor(kind, row) : ["", ""];
  html += `<tr${row === 1 ? ' class="tall"' : ""}><th scope="row" class="rownum${row === 1 ? " active" : ""}">${row}</th>`;
  html += `<td class="${classA}">${spellcheck(a)}</td><td class="${classB}">${spellcheck(b)}</td>`;
  html += "<td></td>".repeat(columns.length - 2) + "</tr>";
}
document.getElementById("sheet").innerHTML = html + "</tbody>";

// Salaries per employee, in euros: [gross, net]
const salaries = [[3190, 2130], [4090, 2740], [3790, 2540], [5190, 3480], [2870, 1920], [2950, 1970], [2390, 1600], [4600, 3070], [2640, 1760]];
const perEuro = 213 / 6000;
document.getElementById("bars").innerHTML = salaries.map(([gross, net], i) => {
  const x = Math.round(82 + i * 40.56);
  const g = gross * perEuro, n = net * perEuro;
  return `<rect class="gross" x="${x}" y="${260 - g}" width="11" height="${g}"/><rect class="net" x="${x + 12}" y="${260 - n}" width="11" height="${n}"/>`;
}).join("");
```
